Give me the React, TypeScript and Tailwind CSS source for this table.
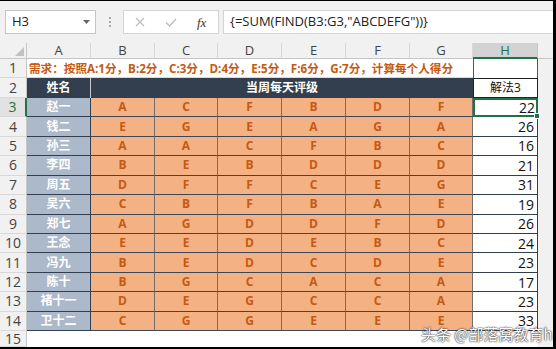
import React from "react";

const rows = [
  { name: "赵一", grades: ["A", "C", "F", "B", "D", "F"], score: 22 },
  { name: "钱二", grades: ["E", "G", "E", "A", "G", "A"], score: 26 },
  { name: "孙三", grades: ["A", "A", "C", "F", "B", "C"], score: 16 },
  { name: "李四", grades: ["B", "E", "B", "D", "D", "D"], score: 21 },
  { name: "周五", grades: ["D", "F", "F", "C", "E", "G"], score: 31 },
  { name: "吴六", grades: ["C", "B", "F", "B", "A", "E"], score: 19 },
  { name: "郑七", grades: ["A", "G", "D", "D", "F", "D"], score: 26 },
  { name: "王念", grades: ["E", "E", "D", "E", "B", "C"], score: 24 },
  { name: "冯九", grades: ["B", "E", "D", "C", "D", "E"], score: 23 },
  { name: "陈十", grades: ["B", "G", "C", "A", "C", "A"], score: 17 },
  { name: "褚十一", grades: ["D", "E", "G", "C", "C", "A"], score: 23 },
  { name: "卫十二", grades: ["C", "G", "G", "E", "E", "E"], score: 33 },
];

const cols = ["A", "B", "C", "D", "E", "F", "G", "H"];

const font = { fontFamily: '"Open Sans", "Noto Sans CJK SC", sans-serif' };

const RowHead = ({ n, active }: { n: number; active?: boolean }) => (
  <div
    className={`flex items-center justify-center border-b border-[#d8d8d8] text-[14px] leading-none ${
      active
        ? "bg-[#e2e2e2] text-[#217346] border-r-2 border-r-[#217346]"
        : "bg-[#f1f1f1] text-[#444] border-r border-r-[#c6c6c6]"
    }`}
  >
    {n}
  </div>
);

export default function App() {
  return (
    <div
      className="w-[556px] h-[349px] overflow-hidden relative bg-[#f1f1f1] border-t border-r-[3px] border-b-2 border-black flex flex-col"
      style={font}
    >
      {/* Formula bar */}
      <div className="h-[42px] flex items-center pl-[5px] shrink-0">
        <div className="w-[91px] h-[24px] bg-white border border-[#c6c6c6] flex items-center justify-between pl-[6px] pr-[5px]">
          <span className="text-[13px] text-[#222]">H3</span>
          <svg width="7" height="4" viewBox="0 0 7 4">
            <path d="M0 0 L7 0 L3.5 4 Z" fill="#666" />
          </svg>
        </div>
        <div className="w-[27px] flex flex-col items-center gap-[2px]">
          <span className="w-[2px] h-[2px] bg-[#a8a8a8]" />
          <span className="w-[2px] h-[2px] bg-[#a8a8a8]" />
          <span className="w-[2px] h-[2px] bg-[#a8a8a8]" />
        </div>
        <div className="w-[96px] h-[24px] bg-white border border-[#d4d4d4] flex items-center pl-[11px] gap-[20px]">
          <svg width="10" height="10" viewBox="0 0 10 10">
            <path d="M1 1 L9 9 M9 1 L1 9" stroke="#bdbdbd" strokeWidth="1.3" />
          </svg>
          <svg width="12" height="9" viewBox="0 0 12 9">
            <path d="M1 4.5 L4.5 8 L11 1" stroke="#bdbdbd" strokeWidth="1.4" fill="none" />
          </svg>
          <span
            className="italic text-[13px] text-[#333] leading-none"
            style={{ fontFamily: '"Liberation Serif", serif' }}
          >
            fx
          </span>
        </div>
        <div className="ml-[4px] flex-1 h-[24px] bg-white border border-[#d4d4d4] border-r-0 flex items-center pl-[6px]">
          <span className="text-[13px] text-[#222]">{'{=SUM(FIND(B3:G3,"ABCDEFG"))}'}</span>
        </div>
      </div>

      {/* Sheet grid */}
      <div className="flex-1 grid grid-cols-[27px_64px_64px_63px_64px_64px_64px_63px_65px_1fr] grid-rows-[16px_repeat(14,19.45px)_1fr]">
        {/* column headers */}
        <div className="relative bg-[#f1f1f1] border-r border-b border-[#c6c6c6]">
          <svg className="absolute left-[15px] top-[4px]" width="9" height="9" viewBox="0 0 9 9">
            <path d="M9 0 L9 9 L0 9 Z" fill="#c2c2c2" />
          </svg>
        </div>
        {cols.map((c) =>
          c === "H" ? (
            <div
              key={c}
              className="flex items-center justify-center bg-[#d3d3d3] text-[#217346] text-[13px] leading-none border-r border-[#c6c6c6] border-b-2 border-b-[#217346]"
            >
              {c}
            </div>
          ) : (
            <div
              key={c}
              className="flex items-center justify-center bg-[#f1f1f1] text-[#444] text-[13px] leading-none border-r border-b border-r-[#d8d8d8] border-b-[#c6c6c6]"
            >
              {c}
            </div>
          )
        )}
        <div className="bg-[#f1f1f1] border-b border-[#c6c6c6]" />

        {/* row 1 */}
        <RowHead n={1} />
        <div className="col-span-7 bg-white border-b border-[#d8d8d8] flex items-center pl-[2px] text-[11.6px] font-bold text-[#c55a11] whitespace-nowrap">
          需求：按照A:1分，B:2分，C:3分，D:4分，E:5分，F:6分，G:7分，计算每个人得分
        </div>
        <div className="bg-white border-x border-[#217346]" />
        <div />

        {/* row 2 */}
        <RowHead n={2} />
        <div className="bg-[#333f4f] border-r border-[#c8ccd2] flex items-center justify-center text-white font-bold text-[12px]">
          姓名
        </div>
        <div className="col-span-6 bg-[#333f4f] flex items-center justify-center text-white font-bold text-[12px]">
          当周每天评级
        </div>
        <div className="bg-white border border-[#222] flex items-center justify-center text-[12px] text-[#111]">
          解法3
        </div>
        <div />

        {/* data rows */}
        {rows.map((r, i) => (
          <React.Fragment key={r.name}>
            <RowHead n={i + 3} active={i === 0} />
            <div className="bg-[#acb9ca] border-r border-b border-[#333f4f] flex items-center justify-center text-white font-bold text-[12px]">
              {r.name}
            </div>
            {r.grades.map((g, j) => (
              <div
                key={j}
                className="bg-[#f4b183] border-b border-b-[#3b4656] border-r border-r-[#6f6f6f] flex items-center justify-center text-[#c55a11] font-bold text-[12px]"
              >
                {g}
              </div>
            ))}
            {i === 0 ? (
              <div className="relative bg-white border-2 border-[#217346] flex items-center justify-end pr-[1px] text-[14px] text-[#111]">
                {r.score}
                <span className="absolute right-[-4px] bottom-[-4px] w-[6px] h-[6px] bg-[#217346] border border-white" />
              </div>
            ) : (
              <div className="bg-white border-b border-r border-[#333f4f] flex items-center justify-end pr-[3px] text-[14px] text-[#111]">
                {r.score}
              </div>
            )}
            <div />
          </React.Fragment>
        ))}

        {/* row 15 */}
        <RowHead n={15} />
        <div className="col-span-8 bg-white" />
        <div />
      </div>

      {/* watermark */}
      <div
        className="absolute left-[421px] top-[322px] text-white text-[15px] whitespace-nowrap [text-shadow:0_0_2px_#222,0_0_1px_#222]"
        style={{ fontFamily: '"Noto Sans CJK SC", sans-serif' }}
      >
        头条 @部落窝教育h
      </div>
    </div>
  );
}
